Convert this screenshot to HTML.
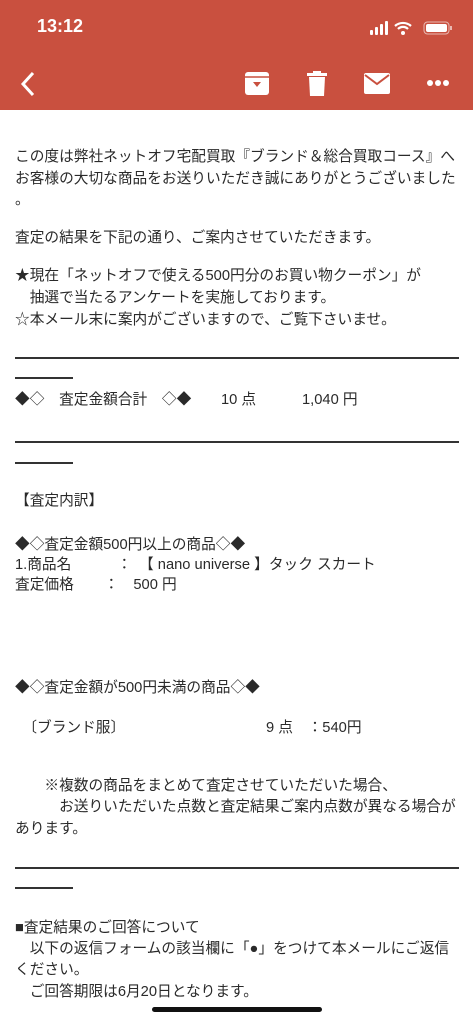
<!DOCTYPE html>
<html><head><meta charset="utf-8"><style>
body{margin:0;width:473px;height:1024px;overflow:hidden;background:#fff;position:relative;font-family:"Liberation Sans","Noto Sans CJK JP",sans-serif;color:#2a2a2a}
.hd{position:absolute;left:0;top:0;width:473px;height:110px;background:#c9503f}
.t{position:absolute;left:15px;font-size:14.7px;white-space:nowrap;line-height:20px}
.r{position:absolute;left:15px;height:2px;background:#333}
</style></head><body>
<div class="hd">
<div style="position:absolute;left:37px;top:16px;color:#fff;font-size:18px;font-weight:600">13:12</div>
<svg style="position:absolute;left:368px;top:20px" width="90" height="18" viewBox="0 0 90 18">
<rect x="2" y="10" width="3" height="5" rx="1" fill="#fff"/><rect x="7" y="7" width="3" height="8" rx="1" fill="#fff"/><rect x="12" y="4" width="3" height="11" rx="1" fill="#fff"/><rect x="17" y="1" width="3" height="14" rx="1" fill="#fff"/>
<path d="M27 6a12 12 0 0 1 16 0M30 9a7 7 0 0 1 10 0" stroke="#fff" stroke-width="2.2" fill="none"/><circle cx="35" cy="13" r="2" fill="#fff"/>
<rect x="56" y="2" width="25" height="12" rx="3.5" fill="none" stroke="#fff" stroke-opacity=".6"/><rect x="58" y="4" width="21" height="8" rx="2" fill="#fff"/><rect x="82" y="6" width="2" height="4" fill="#fff" opacity=".6"/>
</svg>
<svg style="position:absolute;left:18px;top:70px" width="20" height="28"><path d="M15 3L5 14l10 11" stroke="#fff" stroke-width="3" fill="none"/></svg>
<svg style="position:absolute;left:244px;top:71px" width="26" height="25"><rect x="1" y="1" width="24" height="23" rx="3" fill="#fff"/><line x1="1" y1="6" x2="25" y2="6" stroke="#c9503f" stroke-width="1.5"/><path d="M9 11h8l-4 5z" fill="#c9503f"/></svg>
<svg style="position:absolute;left:307px;top:71px" width="20" height="25"><rect x="0" y="2" width="20" height="3" fill="#fff"/><rect x="6" y="0" width="8" height="3" fill="#fff"/><path d="M2 6h16l-1 19H3z" fill="#fff"/></svg>
<svg style="position:absolute;left:364px;top:73px" width="26" height="21"><rect x="0" y="0" width="26" height="21" rx="2" fill="#fff"/><path d="M1 2l12 9 12-9" stroke="#c9503f" stroke-width="2" fill="none"/></svg>
<svg style="position:absolute;left:426px;top:79px" width="24" height="8"><circle cx="4" cy="4" r="3" fill="#fff"/><circle cx="12" cy="4" r="3" fill="#fff"/><circle cx="20" cy="4" r="3" fill="#fff"/></svg>
</div>
<div class="t" style="top:147px">この度は弊社ネットオフ宅配買取『ブランド＆総合買取コース』へ</div>
<div class="t" style="top:169px">お客様の大切な商品をお送りいただき誠にありがとうございました</div>
<div class="t" style="top:190px">。</div>
<div class="t" style="top:228px">査定の結果を下記の通り、ご案内させていただきます。</div>
<div class="t" style="top:266px">★現在「ネットオフで使える500円分のお買い物クーポン」が</div>
<div class="t" style="top:288px">　抽選で当たるアンケートを実施しております。</div>
<div class="t" style="top:310px">☆本メール末に案内がございますので、ご覧下さいませ。</div>
<div class="r" style="top:357px;width:444px"></div><div class="r" style="top:377px;width:58px"></div>
<div class="t" style="top:390px">◆◇　査定金額合計　◇◆</div>
<div class="t" style="top:390px;left:221px">10 点</div>
<div class="t" style="top:390px;left:302px">1,040 円</div>
<div class="r" style="top:441px;width:444px"></div><div class="r" style="top:462px;width:58px"></div>
<div class="t" style="top:491px">【査定内訳】</div>
<div class="t" style="top:535px">◆◇査定金額500円以上の商品◇◆</div>
<div class="t" style="top:555px">1.商品名</div>
<div class="t" style="top:555px;left:117px">：　【 nano universe 】タック スカート</div>
<div class="t" style="top:575px">査定価格</div>
<div class="t" style="top:575px;left:104px">：　500 円</div>
<div class="t" style="top:678px">◆◇査定金額が500円未満の商品◇◆</div>
<div class="t" style="top:718px">　〔ブランド服〕</div>
<div class="t" style="top:718px;left:266px">9 点　：540円</div>
<div class="t" style="top:776px">　　※複数の商品をまとめて査定させていただいた場合、</div>
<div class="t" style="top:797px">　　　お送りいただいた点数と査定結果ご案内点数が異なる場合が</div>
<div class="t" style="top:819px">あります。</div>
<div class="r" style="top:867px;width:444px"></div><div class="r" style="top:887px;width:58px"></div>
<div class="t" style="top:918px">■査定結果のご回答について</div>
<div class="t" style="top:939px">　以下の返信フォームの該当欄に「●」をつけて本メールにご返信</div>
<div class="t" style="top:960px">ください。</div>
<div class="t" style="top:982px">　ご回答期限は6月20日となります。</div>
<div style="position:absolute;left:152px;top:1007px;width:170px;height:5px;border-radius:3px;background:#111"></div>
</body></html>
